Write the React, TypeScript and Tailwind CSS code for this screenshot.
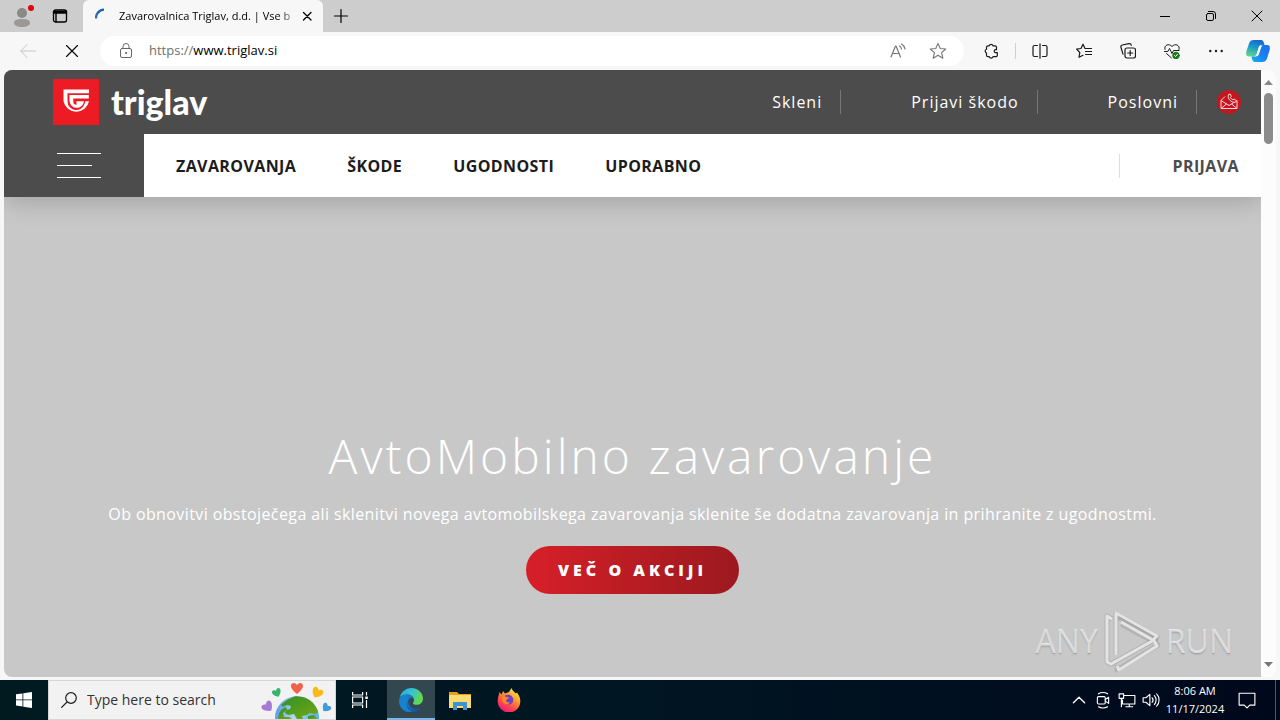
import type { ReactNode } from "react";

const uiFont = "font-['Open_Sans','Noto_Sans',sans-serif]";

function ToolButton({ label, children }: { label: string; children: ReactNode }) {
  return (
    <button type="button" aria-label={label} className="flex h-8 w-11 shrink-0 items-center justify-center text-[#1a1a1a]">
      {children}
    </button>
  );
}

function LineIcon({ children, className = "size-4" }: { children: ReactNode; className?: string }) {
  return (
    <svg viewBox="0 0 16 16" className={className} fill="none" stroke="currentColor" strokeWidth="1" strokeLinecap="round" strokeLinejoin="round" aria-hidden="true">
      {children}
    </svg>
  );
}

function TabStrip() {
  return (
    <header className="flex h-8 shrink-0 items-stretch bg-[#cdcdcd]">
      <button type="button" aria-label="Profile" className="flex w-11 items-center justify-center">
        <svg viewBox="0 0 28 24" className="h-6 w-7" aria-hidden="true">
          <circle cx="14" cy="9" r="5" fill="#8b8885" />
          <path d="M6 19c0-3 3-4 8-4s8 1 8 4c0 2.500-4 4-8 4s-8-1.500-8-4z" fill="#9b9896" />
          <circle cx="23" cy="4" r="3" fill="#e3000f" />
        </svg>
      </button>
      <button type="button" aria-label="Tab actions" className="flex w-8 items-center justify-center text-black">
        <LineIcon>
          <rect x="1.500" y="2" width="13" height="12" rx="2" strokeWidth="1.300" />
          <path d="M1.500 3.500h13M1.500 5h13M4 5v9" strokeWidth="1.400" />
        </LineIcon>
      </button>
      <div className="ml-[7px] flex w-60 items-center rounded-t-md bg-[#f7f7f7] pr-1.5 pl-3">
        <svg viewBox="0 0 16 16" className="size-4 shrink-0" fill="none" aria-hidden="true">
          <path d="M1 10.500A8 8 0 0 1 3 4.500" stroke="#2a6cb0" strokeWidth="2.200" />
          <path d="M2.700 5A8 8 0 0 1 9 1.600" stroke="#1c66ad" strokeWidth="2.400" />
        </svg>
        <span className="ml-2 min-w-0 flex-1 bg-linear-to-r from-black from-90% to-[#aaa] bg-clip-text text-[11px] whitespace-nowrap text-transparent">
          Zavarovalnica Triglav, d.d. | Vse b
        </span>
        <button type="button" aria-label="Close tab" className="ml-1 flex size-5 items-center justify-center">
          <LineIcon className="size-4"><path d="M4.500 4.500l7.500 7.500M12 4.500L4.500 12" strokeWidth="1.300" /></LineIcon>
        </button>
      </div>
      <button type="button" aria-label="New tab" className="flex w-9 items-center justify-center">
        <LineIcon><path d="M8 1.500v13M1.500 8h13" strokeWidth="1.200" /></LineIcon>
      </button>
      <div className="ml-auto flex">
        <button type="button" aria-label="Minimize" className="flex w-[46px] items-center justify-center">
          <LineIcon><path d="M3 8.500h10" strokeLinecap="butt" /></LineIcon>
        </button>
        <button type="button" aria-label="Restore" className="flex w-[46px] items-center justify-center">
          <LineIcon>
            <rect x="3.500" y="5.500" width="7" height="7" rx="1.500" />
            <path d="M5.500 3.500h4.500a2.500 2.500 0 0 1 2.500 2.500v4.500" />
          </LineIcon>
        </button>
        <button type="button" aria-label="Close" className="flex w-[46px] items-center justify-center">
          <LineIcon><path d="M3 3l10 10M13 3L3 13" /></LineIcon>
        </button>
      </div>
    </header>
  );
}

function Toolbar() {
  return (
    <div className="flex h-[38px] shrink-0 items-center bg-[#f7f7f7] pl-1.5">
      <button type="button" aria-label="Back" className="flex w-11 items-center justify-center text-[#c6c6c6]">
        <LineIcon><path d="M15.500 8H.8M7 1.500L.8 8 7 14.500" /></LineIcon>
      </button>
      <button type="button" aria-label="Stop" className="flex w-11 items-center justify-center">
        <LineIcon><path d="M2.500 2.500l11 11M13.500 2.500l-11 11" strokeWidth="1.100" /></LineIcon>
      </button>
      <div className="ml-1.5 flex h-[30px] min-w-0 flex-1 items-center rounded-full bg-white pl-[18px]">
        <LineIcon className="size-4 shrink-0 text-[#666]">
          <rect x="2.500" y="5.500" width="11" height="9" rx="1.500" />
          <path d="M5 5.500V3.500a3 3 0 0 1 6 0v2" />
          <circle cx="8" cy="10" r=".6" fill="currentColor" />
        </LineIcon>
        <label htmlFor="address" className="ml-[15px] text-[13px] text-[#707070]">https://</label>
        <input id="address" defaultValue="www.triglav.si" className="min-w-0 flex-1 bg-transparent text-[13px] text-black outline-none" />
        <button type="button" aria-label="Read aloud" className="flex w-10 items-center justify-center text-[#777]">
          <LineIcon>
            <path d="M1 14L5.500 3h.5L10.500 14M2.500 10.500h6.500M9.500 3a4 4 0 0 1 2 3M11.500 1a7 7 0 0 1 3.500 5" strokeWidth="1.200" />
          </LineIcon>
        </button>
        <button type="button" aria-label="Add to favorites" className="mr-1.5 flex w-10 items-center justify-center text-[#777]">
          <LineIcon className="size-[18px]"><path d="M8 1.200l2 4.600 4.900.4-3.700 3.300 1.100 4.900L8 11.800l-4.300 2.600 1.100-4.900L1.100 6.200 6 5.800z" /></LineIcon>
        </button>
      </div>
      <div className="ml-[5px] flex items-center">
        <ToolButton label="Extensions">
          <LineIcon>
            <path d="M5 2.800h1.200a2 2 0 0 1 3.800 0h2a1.500 1.500 0 0 1 1.500 1.500v2.400h-.8a1.500 1.500 0 0 0 0 3h1.600v2.500a1.500 1.500 0 0 1-1.500 1.500H10a2 2 0 0 1-3.800 0H5a1.500 1.500 0 0 1-1.500-1.500V10a2 2 0 0 1 0-3.800V4.300A1.500 1.500 0 0 1 5 2.800z" strokeWidth="1.200" />
          </LineIcon>
        </ToolButton>
        <span className="mx-0.5 h-4 w-px bg-[#d0d0d0]" />
        <ToolButton label="Split screen">
          <LineIcon><path d="M5.500 2.500H2.500a1.500 1.500 0 0 0-1.500 1.500v8a1.500 1.500 0 0 0 1.500 1.500h3M10.500 2.500h3A1.500 1.500 0 0 1 15 4v8a1.500 1.500 0 0 1-1.500 1.500h-3M8 .8v14.400" strokeWidth="1.200" /></LineIcon>
        </ToolButton>
        <ToolButton label="Favorites">
          <LineIcon><path d="M9 5.500L7 1.200 5 5.500.6 6.200l3.200 3.300-.8 4.800 4-2M9 5.500h6.500M9.500 8.500h6M9.500 11.500h6" strokeWidth="1.200" /></LineIcon>
        </ToolButton>
        <ToolButton label="Collections">
          <LineIcon>
            <rect x="5" y="5" width="10.500" height="10" rx="2" strokeWidth="1.200" />
            <path d="M10.200 7.500v5M7.700 10h5M3 11.200L1 4.500A2 2 0 0 1 2.300 2L9 .7a2 2 0 0 1 2.300 1.600" strokeWidth="1.200" />
          </LineIcon>
        </ToolButton>
        <ToolButton label="Browser essentials">
          <LineIcon>
            <path d="M1 6.500C-.5 2 5 0 8 3.500 11 0 16.500 2 15 6.500M.5 8.500h3.300l1.700-3 2.500 5 1.500-3h5.500M2.500 10.500L7.500 15" />
            <circle cx="12" cy="12.500" r="3.300" fill="#187a18" stroke="#187a18" />
            <path d="M10.500 12.500l1 1 2-2.200" stroke="#fff" />
          </LineIcon>
        </ToolButton>
        <ToolButton label="Settings and more">
          <LineIcon><g fill="currentColor" stroke="none"><circle cx="2.300" cy="8" r="1.200" /><circle cx="8" cy="8" r="1.200" /><circle cx="13.700" cy="8" r="1.200" /></g></LineIcon>
        </ToolButton>
        <button type="button" aria-label="Copilot" className="flex w-[42px] items-center justify-center pr-0.5">
          <svg viewBox="0 0 24 24" className="size-6" aria-hidden="true">
            <defs>
              <linearGradient id="cpA" x1=".6" y1="0" x2=".3" y2="1"><stop stopColor="#1769c8" /><stop offset=".4" stopColor="#1795cf" /><stop offset="1" stopColor="#5fd58b" /></linearGradient>
              <linearGradient id="cpB" x1="1" y1="0" x2="0" y2="1"><stop stopColor="#1f6fe8" /><stop offset=".5" stopColor="#1a80f0" /><stop offset="1" stopColor="#12b3ee" /></linearGradient>
            </defs>
            <path d="M8 1h7c2 0 2.500 1.500 3 3l.5 2h-3c-2 0-2.500 1.300-3 3L10.500 15c-.5 1.500-1.500 2.500-3 2.500H3C0 17.500-.3 15 .5 12L3 4.500C3.800 2 5.500 1 8 1z" fill="url(#cpA)" />
            <path d="M16 23H9c-2 0-2.500-1.500-3-3l-.5-2.500h3c1.500 0 2.500-1 3-2.500l2-6c.5-2 1.500-3 3-3H21c3 0 3.300 2.500 2.500 5.500L21 19.500c-.8 2.500-2.500 3.500-5 3.500z" fill="url(#cpB)" />
            <path d="M13 8.500L11 15c-.6 1.800-1.500 2.500-3 2.500h1.500c2 0 3-.8 3.500-2.500L15 9c.4-1.500 1-2.500 2-2.500h-1.500c-1.500 0-2 .7-2.500 2z" fill="#fff" />
          </svg>
        </button>
      </div>
    </div>
  );
}

function TopLink({ children }: { children: ReactNode }) {
  return (
    <a href="#" className="ml-[70px] flex h-6 items-center border-r border-[#777] pr-[18px] text-base tracking-[1px] text-white">
      {children}
    </a>
  );
}

const sections = ["ZAVAROVANJA", "ŠKODE", "UGODNOSTI", "UPORABNO"];

function SiteHeader() {
  return (
    <div className="relative shadow-[0_4px_24px_rgba(0,0,0,0.2)]">
      <div className="flex h-16 items-center bg-[#4c4c4c] pr-5 pl-[49px]">
        <a href="#" className="flex items-center gap-3 text-white">
          <svg viewBox="0 0 46 46" className="size-[46px]" aria-hidden="true">
            <path d="M0 0h46v46H0z" fill="#ed1c24" />
            <path d="M10.500 10.500h25.500v3.800H14.500v8.200a8.700 8.700 0 0 0 17 2.500l1-2.700H36a13 13 0 0 1-25.500 0z" fill="#fff" />
            <path d="M16.500 16h19.300v3.600H20.300v3a3.200 3.200 0 0 0 3.200 3.200v-3.500H31a7.300 7.300 0 0 1-14.500 0z" fill="#fff" />
          </svg>
          <span className="font-['Lato',sans-serif] text-[34px] leading-10 font-black">triglav</span>
        </a>
        <nav aria-label="Shortcuts" className="ml-auto flex items-center">
          <TopLink>Skleni</TopLink>
          <TopLink>Prijavi škodo</TopLink>
          <TopLink>Poslovni</TopLink>
          <a href="#" aria-label="Kontakt" className="ml-5">
            <svg viewBox="0 0 24 24" className="size-6" fill="none" stroke="#ffd9d9" strokeWidth="1" strokeLinejoin="round" aria-hidden="true">
              <circle cx="12" cy="12" r="12" fill="#c4161f" stroke="none" />
              <path d="M8 6.500L4 10.500v8h16v-8M4 10.500l8 5 8-5M4.500 18l5-4M19.500 18l-5-4" />
              <path d="M11.500 4.500c-1.500 4.500 3 8.500 7 7.700l1-1.500-2.300-1.700-1.300.8c-1.300-.5-2-1.200-2.500-2.500l1-1-1.200-2.300z" fill="#c4161f" />
            </svg>
          </a>
        </nav>
      </div>
      <div className="flex h-[63px] items-center bg-white">
        <button type="button" aria-label="Meni" className="flex h-full w-[140px] flex-col justify-center gap-[11px] bg-[#4c4c4c] pl-[53px]">
          <span className="h-px w-11 bg-white" />
          <span className="h-px w-[35px] bg-white" />
          <span className="h-px w-11 bg-white" />
        </button>
        <nav aria-label="Glavni meni" className="ml-8 flex gap-[51px] text-base font-bold tracking-wide text-[#1c1c1c]">
          {sections.map((name) => (
            <a key={name} href="#">{name}</a>
          ))}
        </nav>
        <a href="#" className="mr-[22px] ml-auto flex h-6 items-center border-l border-[#ddd] pl-[53px] text-base font-bold tracking-wide text-[#4c4c4c]">
          PRIJAVA
        </a>
      </div>
    </div>
  );
}

function Watermark() {
  return (
    <div className="absolute right-7 bottom-1 flex items-center gap-1.5 text-[32px] text-white/60 text-shadow-sm">
      <span>ANY</span>
      <svg viewBox="0 0 56 64" className="h-16 w-14" fill="none" strokeLinejoin="round" aria-hidden="true">
        <g stroke="#8f8f8f" strokeOpacity=".35" strokeWidth="5">
          <path d="M8 10L3 7v46l4 2 45-25-38-22" />
          <path d="M12 46V5l41 23-5 4-31-17" />
          <path d="M13 56v5l41-25-4-5" />
        </g>
        <g stroke="#e4e4e4" strokeWidth="3">
          <path d="M8 10L3 7v46l4 2 43-24" />
          <path d="M12 46V4l41 23-4 4-32-18" />
          <path d="M13 57l2 4 38-24-4-7" />
        </g>
      </svg>
      <span>RUN</span>
    </div>
  );
}

function Scrollbar() {
  return (
    <div className="flex w-[15px] shrink-0 flex-col items-center rounded-r-lg bg-[#fcfcfc] py-2.5" aria-hidden="true">
      <svg viewBox="0 0 9 5" className="h-[5px] w-[9px]"><path d="M0 5L4.500 0 9 5z" fill="#888" /></svg>
      <span className="mt-2 h-[51px] w-[9px] rounded-full bg-[#8b8b8b]" />
      <svg viewBox="0 0 9 5" className="mt-auto h-[5px] w-[9px]"><path d="M0 0l4.500 5L9 0z" fill="#777" /></svg>
    </div>
  );
}

function Page() {
  return (
    <div className="flex min-h-0 flex-1 bg-[#f7f7f7] px-1 pb-[3px]">
      <main className="relative flex min-w-0 flex-1 flex-col overflow-hidden rounded-l-lg bg-[#c8c8c8]">
        <SiteHeader />
        <section className="flex flex-1 flex-col items-center justify-end pb-[83px] text-center text-white">
          <h1 className="text-5xl leading-16 font-light tracking-[3px]">AvtoMobilno zavarovanje</h1>
          <p className="mt-3.5 text-base leading-6 tracking-wide">
            Ob obnovitvi obstoječega ali sklenitvi novega avtomobilskega zavarovanja sklenite še dodatna zavarovanja in prihranite z ugodnostmi.
          </p>
          <button type="button" className="mt-5 h-12 rounded-full bg-linear-to-r from-[#d71f28] to-[#9c191f] px-8 text-base font-extrabold tracking-[4px]">
            VEČ O AKCIJI
          </button>
        </section>
        <Watermark />
      </main>
      <Scrollbar />
    </div>
  );
}

function Globe() {
  const heart = "M0 4C-6 0-5-4-2.500-4-1-4 0-2.500 0-2.500S1-4 2.500-4C5-4 6 0 0 4z";
  return (
    <svg viewBox="0 0 72 38" className="h-[38px] w-[72px] shrink-0" aria-hidden="true">
      <defs>
        <linearGradient id="sea" x1="0" y1="0" x2="1" y2=".2"><stop stopColor="#4f8fe8" /><stop offset=".5" stopColor="#a9dcf8" /><stop offset="1" stopColor="#58b4e8" /></linearGradient>
        <linearGradient id="land" x1="0" y1="0" x2="1" y2="1"><stop stopColor="#2f8f2c" /><stop offset="1" stopColor="#79a80f" /></linearGradient>
        <clipPath id="globe"><circle cx="37" cy="37" r="22" /></clipPath>
      </defs>
      <circle cx="37" cy="37" r="22" fill="url(#sea)" />
      <g clipPath="url(#globe)" fill="url(#land)">
        <path d="M27 19l8-4 10 1 8 5 6 10-4 2-5-1-3 2-5 1 1 3h-6l-3-5-6 1-3-2 1-3 4-1 1-3-4-1-4 2-2-2z" />
        <path d="M22 28l4-2 1 3-4 3 1 4 5 0 3 2H18l1-6z" />
        <path d="M48 35l6-1 3 4h-9z" />
      </g>
      <path d={heart} transform="translate(37 7.500) scale(1.350)" fill="#f0614d" />
      <path d={heart} transform="translate(17 12) rotate(-25)" fill="#35b56c" />
      <path d={heart} transform="translate(57 12) rotate(30) scale(1.250)" fill="#f9b916" />
      <path d={heart} transform="translate(8 26) rotate(-40) scale(1.250)" fill="#a77ad4" />
      <path d={heart} transform="translate(66 27) rotate(40)" fill="#3f9bdc" />
    </svg>
  );
}

function TrayButton({ label, children }: { label: string; children: ReactNode }) {
  return (
    <button type="button" aria-label={label} className="flex w-6 items-center justify-center">
      <LineIcon className="size-[18px]">{children}</LineIcon>
    </button>
  );
}

function Taskbar() {
  return (
    <footer className="flex h-10 shrink-0 items-stretch bg-linear-to-r from-[#001a20] via-[#001622] to-[#00081c] text-white">
      <button type="button" aria-label="Start" className="flex w-12 items-center justify-center">
        <svg viewBox="0 0 16 16" className="size-4" fill="#fff" aria-hidden="true">
          <path d="M0 2.300L6.500 1.400v6.100H0zM7.300 1.300L16 0v7.500H7.300zM0 8.300h6.500v6.200L0 13.600zM7.300 8.300H16V16l-8.700-1.300z" />
        </svg>
      </button>
      <div className="flex w-72 items-center border border-[#d5d5d5] bg-[#f2f2f2] pl-3 text-[#1d1d1d]">
        <svg viewBox="0 0 16 16" className="size-4 shrink-0" fill="none" stroke="currentColor" strokeWidth="1.200" aria-hidden="true">
          <circle cx="10" cy="6" r="5.300" /><path d="M6 10L.3 15.700" />
        </svg>
        <input aria-label="Search" placeholder="Type here to search" className="ml-2.5 min-w-0 flex-1 bg-transparent text-sm outline-none placeholder:text-[#333]" />
        <Globe />
        <span className="w-[3px]" />
      </div>
      <button type="button" aria-label="Task view" className="mr-[3px] flex w-12 items-center justify-center">
        <svg viewBox="0 0 16 16" className="size-4" fill="none" stroke="#fff" strokeWidth="1.200" aria-hidden="true">
          <path d="M.6 0v3h10V0M.6 16v-3h10v3M.6 5h10v6H.6zM14.500 0v3.500M14.500 8v8" />
          <path d="M13.300 4.500h2.500V7h-2.500z" fill="#fff" stroke="none" />
        </svg>
      </button>
      <button type="button" aria-label="Microsoft Edge" className="flex w-12 items-center justify-center border-b-2 border-[#76b9ed] bg-[#33474f] pt-0.5">
        <svg viewBox="0 0 24 24" className="size-6" aria-hidden="true">
          <defs>
            <linearGradient id="eA" x1="0" y1="0" x2="1" y2=".4"><stop stopColor="#2aa8e0" /><stop offset=".5" stopColor="#34c1d8" /><stop offset="1" stopColor="#62d84e" /></linearGradient>
            <linearGradient id="eB" x1="0" y1="0" x2="1" y2="1"><stop stopColor="#1b8fdd" /><stop offset="1" stopColor="#114a8b" /></linearGradient>
          </defs>
          <path d="M.5 10A11.800 11.800 0 0 1 12 0c7 0 12 5 12 10.500 0 4-3 6.300-6.300 6.300-2.700 0-4-.9-3.700-1.800.4-.8 1-1.500 1-3C15 9 12 6.500 8.500 6.500 5 6.500 1.500 8 .5 10z" fill="url(#eA)" />
          <path d="M.2 11.500C1.500 8 5 6.500 8.500 6.500c3 0 5 1.500 6 3.500-4-1-6 2-5 5.500 1.200 4.200 6.500 6.500 11.500 4.300.6-.3 1 .2.600.7A12 12 0 0 1 .2 11.500z" fill="url(#eB)" />
          <path d="M9 12c-4 4-1 10.500 4.500 11.800C5 25 0 19 .2 12c1.500-3 6-4.500 8.800 0z" fill="#1582d2" />
        </svg>
      </button>
      <button type="button" aria-label="File Explorer" className="ml-px flex w-12 items-center justify-center">
        <svg viewBox="0 0 22 19" className="h-[19px] w-[22px]" aria-hidden="true">
          <path d="M0 1h8l2 2h12v4H0z" fill="#e8a11c" />
          <path d="M0 4h22v13H0z" fill="#fbdb73" />
          <path d="M4 19v-8h14v8h-4v-4H8v4z" fill="#3d93d0" />
        </svg>
      </button>
      <button type="button" aria-label="Firefox" className="flex w-[50px] items-center justify-center">
        <svg viewBox="0 0 24 24" className="size-6" aria-hidden="true">
          <defs><linearGradient id="fx" x1=".8" y1="0" x2=".2" y2="1"><stop stopColor="#fff04a" /><stop offset=".35" stopColor="#ffa02c" /><stop offset=".7" stopColor="#ff4050" /><stop offset="1" stopColor="#e31587" /></linearGradient></defs>
          <path d="M2.500 4l2 2.500L6 3l2 2.500L12 4l2.500-4c1 3 3 4 4.500 5.500l1-1c2 2.500 3.500 6 3.300 9A11.300 11.300 0 0 1 .7 13C.7 9 2 7.500 2.500 4z" fill="url(#fx)" />
          <path d="M8 7.500c3-2 8-.5 8.300 4 .2 3-2 5-4.500 5-3 0-4.500-2-4.300-4l3-1.500c-2 0-3-1.500-2.500-3.500z" fill="#7040c8" />
          <path d="M6 8c2 0 3 1.500 6 1.500-.5 1.500-2.500 1.500-3 3 0 1.500 2 2.500 4 1.500-2 4-8 2-8-2.500z" fill="#ff8a22" />
        </svg>
      </button>
      <div className="ml-auto flex items-stretch">
        <TrayButton label="Show hidden icons"><path d="M3 10.500L8 5.500l5 5" strokeWidth="1.200" /></TrayButton>
        <TrayButton label="Meet now">
          <rect x="3" y="5" width="7" height="6.500" rx="1" /><path d="M10 7.500l3-2v5.500l-3-2M4 2.500c2-1.500 6-1.500 8 0M4 14c2 1.500 6 1.500 8 0" />
        </TrayButton>
        <TrayButton label="Network"><path d="M5 4h10v7.500H4V8M7 14h6M10 11.500V14M1 2.500h4v4H1zM3 6.500V14" /></TrayButton>
        <TrayButton label="Volume"><path d="M1 6v4h2.500L7 13V3L3.500 6zM9 6a3 3 0 0 1 0 4M11 4a6 6 0 0 1 0 8M13 2.500a8 8 0 0 1 0 11" /></TrayButton>
        <time className="flex w-16 flex-col items-center justify-center text-[11px] leading-[18px] whitespace-nowrap">
          <span>8:06 AM</span>
          <span>11/17/2024</span>
        </time>
        <button type="button" aria-label="Notifications" className="flex w-10 items-center justify-center">
          <LineIcon className="size-[18px]"><path d="M1 2h14v10.500h-4.500L8 15l-2.500-2.500H1z" /></LineIcon>
        </button>
        <span className="ml-2 w-[5px] border-l border-[#4b5566]" />
      </div>
    </footer>
  );
}

export default function App() {
  return (
    <div className={`flex h-screen flex-col overflow-hidden ${uiFont}`}>
      <TabStrip />
      <Toolbar />
      <Page />
      <Taskbar />
    </div>
  );
}
